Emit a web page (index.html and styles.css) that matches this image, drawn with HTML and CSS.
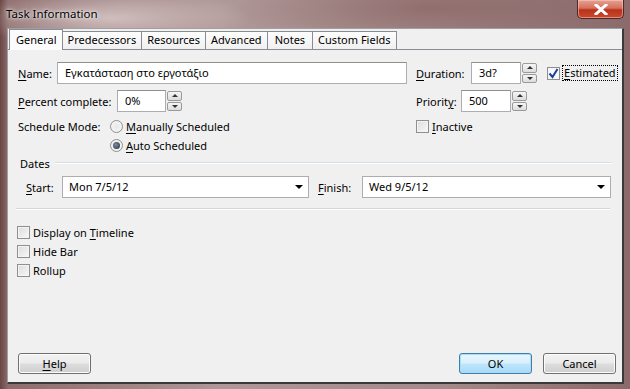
FILE: index.html
```html
<!DOCTYPE html>
<html lang="en">
<head>
    <meta charset="UTF-8">
    <title>Task Information</title>
    <link rel="stylesheet" href="styles.css">
</head>
<body>
    <div class="window">
        <div class="titlebar">
            <span class="title">Task Information</span>
            <button class="close">
                <svg width="14" height="11" viewBox="0 0 14 11"><path d="M2 1 L12 10 M12 1 L2 10" stroke="#fff" stroke-width="3" stroke-linecap="square"/></svg>
            </button>
        </div>

        <div class="client">
            <div class="tabs">
                <span class="tab active">General</span>
                <span class="tab">Predecessors</span>
                <span class="tab">Resources</span>
                <span class="tab">Advanced</span>
                <span class="tab wide">Notes</span>
                <span class="tab">Custom Fields</span>
            </div>

            <div class="panel">
                <div class="top-grid">
                    <div class="row">
                        <label class="lbl w-name"><u>N</u>ame:</label>
                        <span class="field w-namefield">Εγκατάσταση στο εργοτάξιο</span>
                    </div>
                    <div class="row">
                        <label class="lbl w-dur"><u>D</u>uration:</label>
                        <span class="field w-num">3d?</span>
                        <span class="spin"><i class="up"></i><i class="down"></i></span>
                        <span class="check checked"><svg width="11" height="11" viewBox="0 0 11 11"><path d="M1.5 5.5 L4.5 9 L9.5 1" fill="none" stroke="#1c3f94" stroke-width="2"/></svg></span>
                        <span class="focus"><u>E</u>stimated</span>
                    </div>

                    <div class="row">
                        <label class="lbl w-pct"><u>P</u>ercent complete:</label>
                        <span class="field w-pctfield">0%</span>
                        <span class="spin"><i class="up"></i><i class="down"></i></span>
                    </div>
                    <div class="row">
                        <label class="lbl w-pri">Priorit<u>y</u>:</label>
                        <span class="field w-num">500</span>
                        <span class="spin"><i class="up"></i><i class="down"></i></span>
                    </div>

                    <div class="row short">
                        <label class="lbl w-mode">Schedule Mode:</label>
                        <span class="radio"></span>
                        <span><u>M</u>anually Scheduled</span>
                    </div>
                    <div class="row short">
                        <span class="check"></span>
                        <span><u>I</u>nactive</span>
                    </div>

                    <div class="row short tight">
                        <span class="w-mode"></span>
                        <span class="radio on"></span>
                        <span><u>A</u>uto Scheduled</span>
                    </div>
                </div>

                <div class="group-title">
                    <span>Dates</span>
                    <span class="rule"></span>
                </div>

                <div class="dates">
                    <label class="lbl w-start"><u>S</u>tart:</label>
                    <span class="combo w-startcombo">Mon 7/5/12<i class="arrow"></i></span>
                    <label class="lbl w-finish"><u>F</u>inish:</label>
                    <span class="combo w-finishcombo">Wed 9/5/12<i class="arrow"></i></span>
                </div>

                <div class="separator"></div>

                <div class="options">
                    <div class="row short"><span class="check"></span><span>Display on <u>T</u>imeline</span></div>
                    <div class="row short"><span class="check"></span><span>Hide Bar</span></div>
                    <div class="row short"><span class="check"></span><span>Rollup</span></div>
                </div>

                <div class="buttons">
                    <button class="btn"><u>H</u>elp</button>
                    <span class="spacer"></span>
                    <button class="btn default">OK</button>
                    <button class="btn">Cancel</button>
                </div>
            </div>
        </div>
    </div>
</body>
</html>
```

FILE: styles.css
```css
body {
    margin: 0;
    width: 630px;
    height: 389px;
    overflow: hidden;
    font-family: 'Noto Sans', sans-serif;
    font-size: 11px;
    color: #000;
}

.window {
    width: 630px;
    height: 389px;
    display: flex;
    flex-direction: column;
    background:
        radial-gradient(ellipse 200px 40px at 430px 8px, rgba(120, 75, 75, 0.45), transparent),
        radial-gradient(ellipse 140px 30px at 110px 18px, rgba(235, 222, 222, 0.65), transparent),
        linear-gradient(90deg, #6a4545 0px, #8d6c6c 8px, #b09898 35%, #a48a8a 70%, #8a6a6a 100%);
}

.titlebar {
    height: 28px;
    display: flex;
    align-items: flex-start;
    justify-content: space-between;
}

.title {
    margin: 6px 0 0 6px;
    font-size: 11.5px;
    color: #000;
    text-shadow: 0 0 6px rgba(255, 255, 255, 0.9), 0 0 3px rgba(255, 255, 255, 0.9);
}

.close {
    width: 47px;
    height: 19px;
    margin-right: 6px;
    padding: 0;
    border: 1px solid #4a2a2a;
    border-top: none;
    border-radius: 0 0 5px 5px;
    background: linear-gradient(#e6a294 0%, #d5705c 45%, #b8331c 55%, #c94a2e 100%);
    box-shadow: inset 0 0 0 1px rgba(255, 210, 200, 0.5);
    display: flex;
    align-items: center;
    justify-content: center;
}

.client {
    flex: 1;
    margin: 0 6px 5px 7px;
    background: #f0f0f0;
    border-top: 1px solid #a0a0a0;
    border-left: 1px solid #a0a0a0;
    border-right: 2px solid #3a3a3a;
    border-bottom: 2px solid #3a3a3a;
    display: flex;
    flex-direction: column;
}

.tabs {
    display: flex;
    align-items: flex-end;
    height: 20px;
    padding: 0 0 0 1px;
    border-bottom: 1px solid #898c95;
}

.tab {
    height: 17px;
    line-height: 16px;
    padding: 0 5px;
    border: 1px solid #898c95;
    border-bottom: none;
    border-left: none;
    background: linear-gradient(#fdfdfd, #f0f0f0);
    white-space: nowrap;
}

.tab.wide {
    padding: 0 7px;
}

.tab.active {
    height: 20px;
    line-height: 19px;
    margin-bottom: -1px;
    padding: 0 5px 0 6px;
    border-left: 1px solid #898c95;
    background: #fbfbfb;
}

.panel {
    flex: 1;
    display: flex;
    flex-direction: column;
    padding: 12px 6px 8px 10px;
}

.top-grid {
    display: grid;
    grid-template-columns: 398px 1fr;
    row-gap: 6px;
}

.row {
    display: flex;
    align-items: center;
    height: 22px;
    white-space: nowrap;
}

.row.short {
    height: 13px;
    margin-top: 2px;
}

.row.short.tight {
    margin-top: 0;
}

.lbl {
    flex: none;
    white-space: nowrap;
}

u {
    text-decoration-thickness: 1px;
    text-underline-offset: 2px;
}

.w-name { width: 39px; }
.w-namefield { width: 341px; }
.w-dur { width: 55px; }
.w-num { width: 41px; }
.w-pct { width: 99px; }
.w-pctfield { width: 40px; }
.w-pri { width: 45px; }
.w-mode { width: 92px; flex: none; }

.field {
    height: 20px;
    line-height: 20px;
    padding: 0 0 0 7px;
    border: 1px solid #abadb3;
    border-top-color: #8e8f8f;
    background: #fff;
    white-space: nowrap;
    flex: none;
}

.spin {
    width: 15px;
    height: 20px;
    margin-left: 1px;
    display: flex;
    flex-direction: column;
    gap: 1px;
    flex: none;
}

.spin i {
    flex: 1;
    border: 1px solid #9a9a9a;
    border-radius: 2px;
    background: linear-gradient(#f6f6f6, #dcdcdc);
    position: relative;
}

.spin i::after {
    content: "";
    position: absolute;
    left: 4px;
    top: 2px;
    border-left: 3px solid transparent;
    border-right: 3px solid transparent;
}

.spin .up::after { border-bottom: 3px solid #333; }
.spin .down::after { border-top: 3px solid #333; }

.check {
    width: 11px;
    height: 11px;
    flex: none;
    border: 1px solid #8e8f8f;
    background: linear-gradient(135deg, #dcdcdc, #f8f8f8);
    box-shadow: inset 0 0 0 1px #f4f4f4;
    margin-right: 3px;
    display: flex;
    align-items: center;
    justify-content: center;
}

.row .check.checked {
    margin-left: 10px;
    background: #f6f8fc;
}

.focus {
    outline: 1px dotted #000;
    padding: 0 1px;
    line-height: 14px;
}

.radio {
    width: 11px;
    height: 11px;
    flex: none;
    border: 1px solid #8e8f8f;
    border-radius: 50%;
    background: radial-gradient(circle, #e8e8e8, #f8f8f8);
    margin-right: 3px;
    position: relative;
}

.radio.on::after {
    content: "";
    position: absolute;
    left: 2px;
    top: 2px;
    width: 7px;
    height: 7px;
    border-radius: 50%;
    background: radial-gradient(circle at 40% 40%, #7e8ea4, #1d2a3d);
}

.group-title {
    display: flex;
    align-items: center;
    gap: 5px;
    margin: 4px 4px 0 2px;
    height: 14px;
}

.rule {
    flex: 1;
    height: 1px;
    background: #d5dfe5;
    border-bottom: 1px solid #fff;
}

.dates {
    display: flex;
    align-items: center;
    margin: 6px 0 0 8px;
}

.w-start { width: 36px; }
.w-startcombo { width: 239px; }
.w-finish { width: 44px; margin-left: 9px; }
.w-finishcombo { width: 241px; }

.combo {
    height: 20px;
    line-height: 20px;
    padding: 0 0 0 6px;
    border: 1px solid #abadb3;
    background: #fff;
    display: flex;
    justify-content: space-between;
    align-items: center;
    flex: none;
}

.arrow {
    width: 0;
    height: 0;
    margin-right: 5px;
    border-left: 4px solid transparent;
    border-right: 4px solid transparent;
    border-top: 4px solid #000;
}

.separator {
    height: 1px;
    margin: 10px 6px 0 -2px;
    background: #d5d5d5;
    border-bottom: 1px solid #fff;
}

.options {
    display: flex;
    flex-direction: column;
    gap: 4px;
    margin: 14px 0 0 -1px;
}

.buttons {
    margin-top: auto;
    display: flex;
    align-items: center;
    gap: 11px;
}

.spacer { flex: 1; }

.btn {
    width: 73px;
    height: 21px;
    padding: 0;
    font-family: 'Noto Sans', sans-serif;
    font-size: 11px;
    color: #000;
    border: 1px solid #707070;
    border-radius: 3px;
    background: linear-gradient(#f2f2f2 0%, #ebebeb 48%, #dddddd 52%, #cfcfcf 100%);
    box-shadow: inset 0 0 0 1px #fcfcfc;
}

.btn.default {
    border-color: #3c7fb1;
    background: linear-gradient(#eaf6fd 0%, #d9f0fc 48%, #bee6fd 52%, #a7d9f5 100%);
    box-shadow: inset 0 0 0 1px #aadcf5;
}
```
